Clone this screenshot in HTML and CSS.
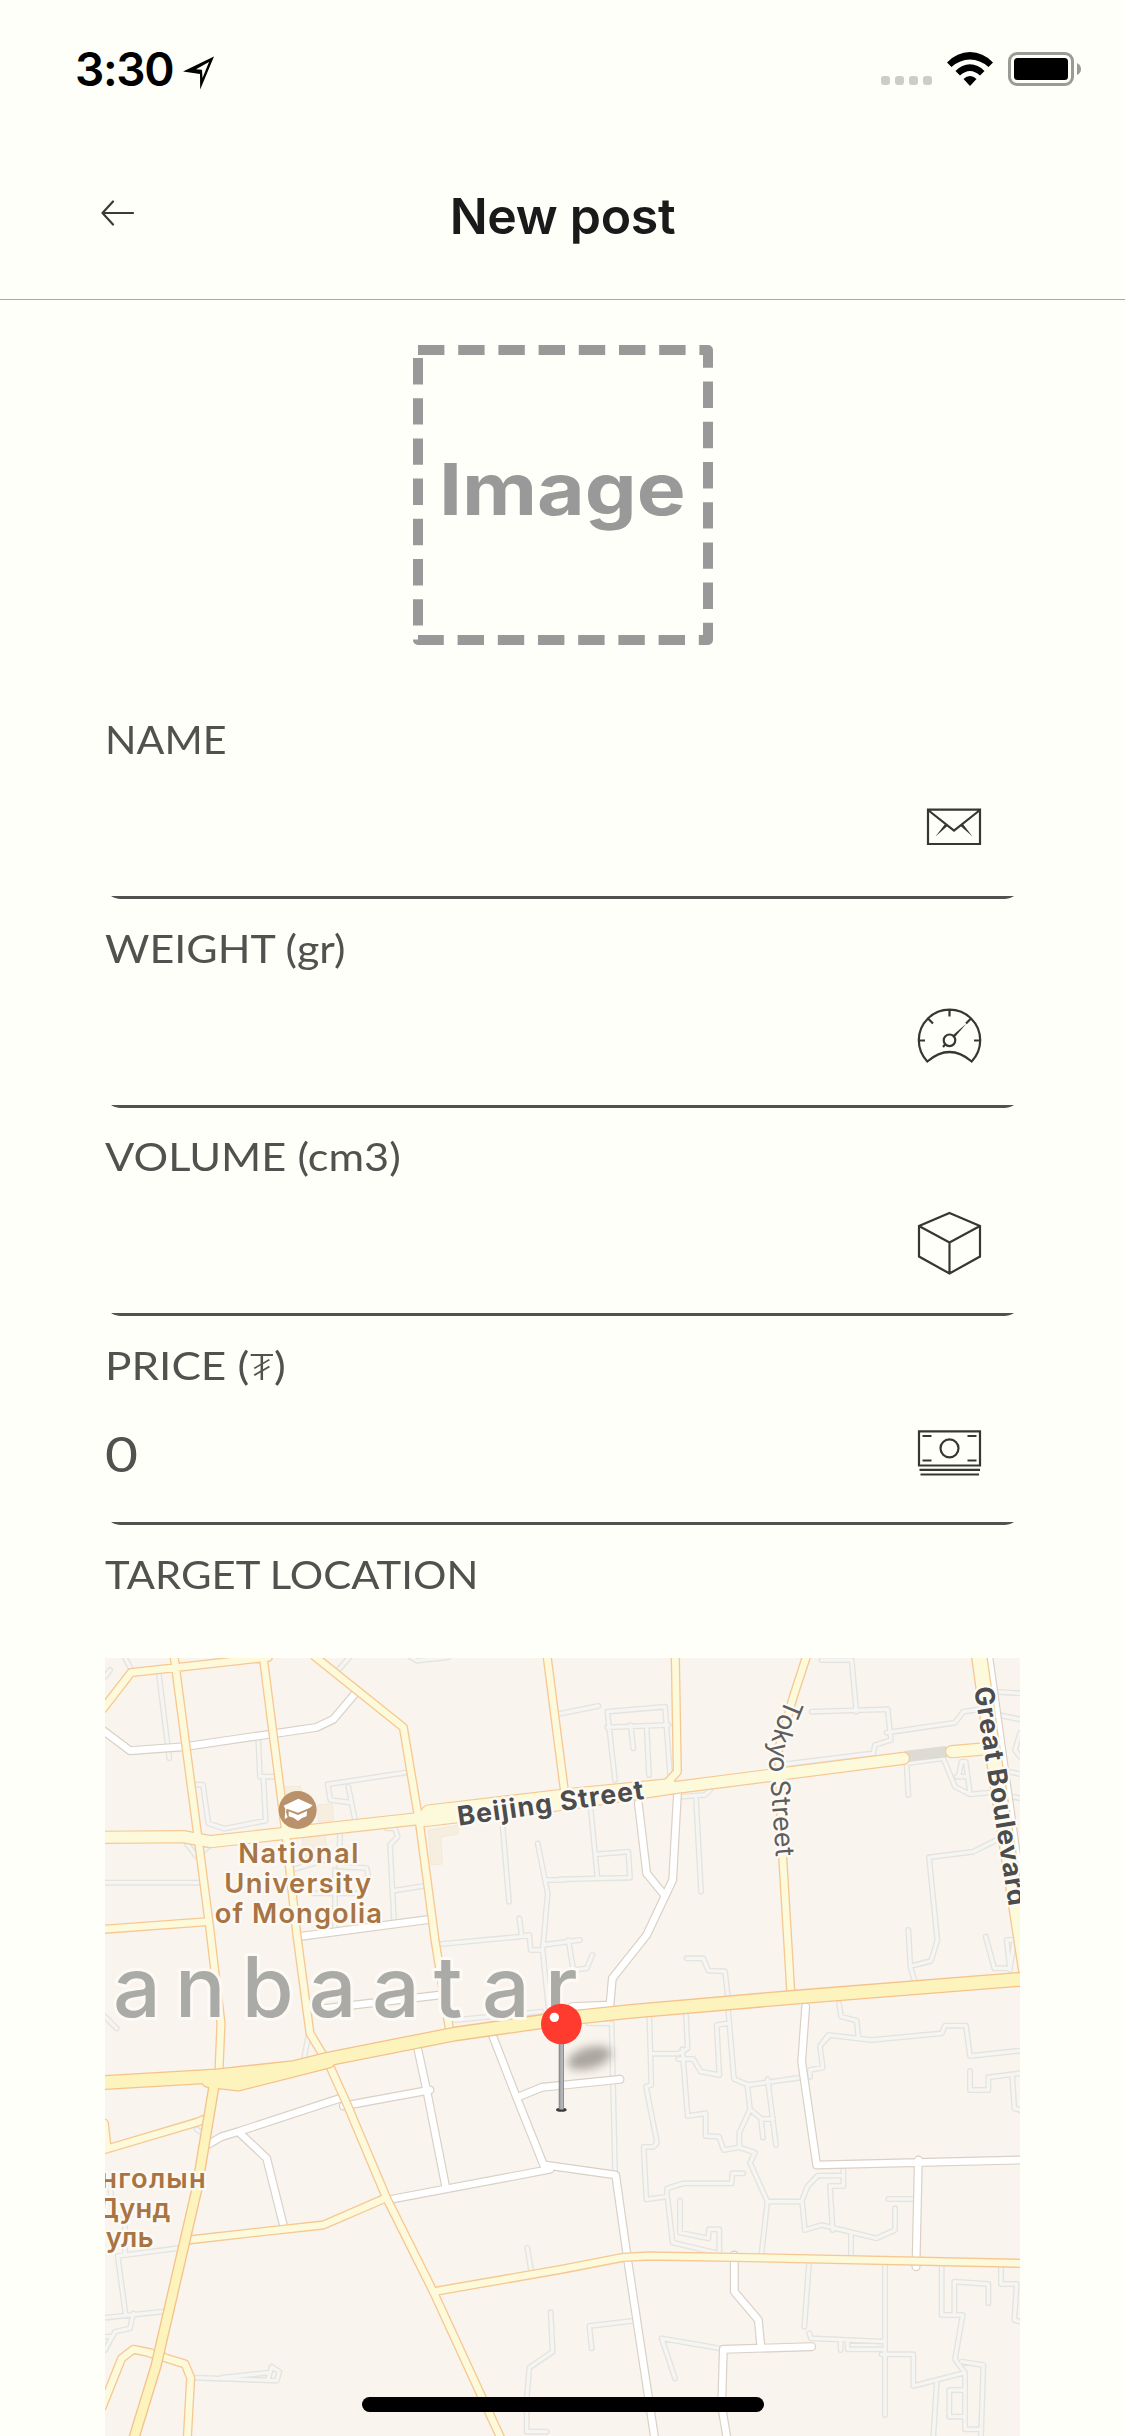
FILE: index.html
```html
<!DOCTYPE html>
<html lang="en">
<head>
<meta charset="utf-8">
<title>New post</title>
<link rel="stylesheet" href="styles.css">
</head>
<body>
<div class="screen">
  <div class="statusbar">
    <span class="time">3:30</span>
    <svg class="loc" width="32" height="34" viewBox="0 0 32 34"><path fill-rule="evenodd" d="M31 .5 17.200 33.500 17 18 0 15.500ZM26 6 13 13.300 19 13.700 19.500 22Z"/></svg>
    <div class="indicators">
      <div class="signal"><i></i><i></i><i></i><i></i></div>
      <svg class="wifi" width="46" height="34" viewBox="0 0 46 34"><path d="M0 10.500Q10 0 23 0T46 10.500L41.500 15Q33 7.500 23 7.500T4.500 15Z"/><path d="M8.500 19Q15 12.300 23 12.300T37.500 19L33 23.500Q28 19 23 19T13 23.500Z"/><path d="M16.500 27Q19.500 24 23 24T29.500 27L23 34Z"/></svg>
      <svg class="battery" width="74" height="34" viewBox="0 0 74 34"><rect x="1.500" y="1.500" width="63" height="31" rx="7.500" fill="none" stroke="#9b9b96" stroke-width="3"/><rect x="6" y="6" width="54" height="22" rx="3.500"/><path d="M69 11Q73 13 73 17T69 23Z" fill="#9b9b96"/></svg>
    </div>
  </div>
  <header class="header">
    <svg class="back" width="33" height="26" viewBox="0 0 33 26"><path d="M32 13H2M12 1.500 1.500 13 12 24.500"/></svg>
    <h1 class="title">New post</h1>
  </header>
  <main class="form">
    <div class="picker">
      <svg class="dashes" width="300" height="300" viewBox="0 0 300 300"><path d="M5 5H295V295H5Z"/></svg>
      <span class="picker-text">Image</span>
    </div>
    <div class="field">
      <label class="label l-name">NAME</label>
      <div class="input"><span class="value"></span>
        <svg class="icon" width="66" height="70" viewBox="916 792 66 70"><path d="M928 809.700H980V844H928ZM928 810 954 830.500 980 810"/><path class="solid" d="M945.500 823.500 948 825.500 935.500 836.500ZM962.500 823.500 960 825.500 972.500 836.500Z"/></svg>
      </div>
    </div>
    <div class="field">
      <label class="label l-weight">WEIGHT (gr)</label>
      <div class="input"><span class="value"></span>
        <svg class="icon" width="66" height="70" viewBox="916 1001 66 70"><path d="M927.300 1061.500A30.700 30.700 0 1 1 971.700 1061.500Q949.500 1042.500 927.300 1061.500ZM918.500 1040.500H925M974 1040.500H980.500M949.500 1010V1016.500M928 1018.500 933 1023.500M971 1018.500 966 1023.500M943 1047 945.500 1044"/><circle cx="949.500" cy="1040.300" r="5.800"/><path class="solid" d="M952.500 1035.500 966.500 1023.500 954.500 1037.500Z"/></svg>
      </div>
    </div>
    <div class="field">
      <label class="label l-volume">VOLUME (cm3)</label>
      <div class="input"><span class="value"></span>
        <svg class="icon" width="66" height="70" viewBox="916 1210 66 70"><path d="M949.500 1214 980 1227V1257.500L949.500 1274.500 919 1257.500V1227ZM919 1227 949.500 1243.500 980 1227M949.500 1243.500V1274"/></svg>
      </div>
    </div>
    <div class="field">
      <label class="label l-price">PRICE (<span class="tugrik">₮</span>)</label>
      <div class="input"><span class="value">0</span>
        <svg class="icon" width="66" height="70" viewBox="916 1418 66 70"><path d="M919 1431.300H980V1465.500H919ZM922.500 1436H931.500M967.500 1436H976.500M922.500 1460.500H931.500M967.500 1460.500H976.500M919.500 1469.800H980M920.500 1474.500H979"/><circle cx="949.500" cy="1448.300" r="9"/></svg>
      </div>
    </div>
    <label class="label l-target">TARGET LOCATION</label>
    <svg class="map" width="915" height="778" viewBox="30 54 2745 2334">
      <defs>
        <filter id="blur" x="-50%" y="-80%" width="200%" height="260%"><feGaussianBlur stdDeviation="15"/></filter>
        <path id="minor" d="M90 54 110 90M30 110 45 90M192 105 223 355M490 305 495 410H535M505 410 512 542 388 566 340 550 324 434H300M930 398 698 433 706 480 768 488M760 440 780 540M875 565H900L908 590 885 615 897 840M897 752 985 738M735 580 732 680 815 684 820 710M595 688 690 660M720 690V860M655 760H790M30 728H310M275 610 305 650 340 620M730 90 765 50M945 50 965 62 1060 52M1223 560 1242 785M1328 610 1358 760 1343 930 1360 1100M1356 720H1410M1040 912 1275 890 1303 885 1307 930H1343M1273 835 1280 885M1343 915 1455 900M1390 222 1510 198M30 1130 65 1165M1080 1140 1340 1115
        M2180 60H2270L2284 215M2150 215 2378 208 2388 300 2340 315 2335 340 2075 372M2375 278 2580 248 2605 215 2655 208M1560 420 1537 215 1710 200 1725 400M1537 262 1720 255M1607 255 1615 325M1655 262 1662 405M1487 505 1507 710M1395 718 1605 713 1600 635 1502 643M1803 475 1818 755M1760 470 1830 465 1845 450M1775 955H1825L1840 992 1890 994 1898 1065M2440 870 2446 980 2458 1020M2448 978 2508 963 2527 900 2502 652 2635 635 2705 600M2435 375 2440 465M2435 370 2545 355 2580 440 2625 463 2680 458M2590 410 2600 365H2612L2625 460M2585 410H2615M2672 890 2698 985H2745L2758 900H2735L2745 990M2700 155 2775 160M2710 225 2775 238M2740 395 2775 402M2750 470 2775 474M2775 280 2760 330 2775 350M1420 900 1435 990 1475 985 1492 945
        M1663 1130 1669 1335 1653 1340 1686 1508 1676 1520 1646 1521 1654 1678 1715 1670M1670 1241H1750L1778 1225 1773 1125M1750 1257H1795L1817 1295 1873 1305 1865 1155 1900 1150M1762 1228 1778 1428 1832 1420V1488L1872 1490 1886 1530 1933 1522 1980 1538 1965 1568 2017 1684 2120 1685 2137 1640 2168 1607 2245 1606M2245 1590V1638H2205L2213 1770M2017 1684 2000 1838M2121 1685 2130 1770 2180 1755 2345 1795 2400 1770V1705M2268 1785V1845M2380 1677H2455M1900 1115 1917 1317 1960 1335 2115 1313M1957 1335 1965 1408 2000 1437H2035M1965 1408 1933 1478V1522M2018 1318 2043 1515M1998 1437 2004 1493M1480 1150H1550L1560 1590M2232 1090 2238 1130 2285 1142 2290 1190M2185 1205 2200 1185 2330 1200 2540 1180 2550 1157H2613L2625 1248 2775 1232M2200 1190 2175 1218 2183 1283 2145 1290V1310M2625 1293V1350H2680V1312L2775 1300M2752 1312 2758 1405 2775 1410M1715 1670 1717 1645 1765 1630H1910L1912 1600H1945M1717 1670 1733 1808 1870 1840M1755 1682V1778L1840 1795 1842 1768H1873V1840
        M2142 1870 2128 2060M2370 1875V2325M2143 2080 2148 2095 2370 2105M2237 2100V2130M2258 2105V2128H2370M2360 2143H2455V2238L2610 2198 2580 2158 2603 2025H2540V1875M2578 2025V1925L2680 1932V1990M2525 2230 2515 2388M2600 2165 2665 2175 2658 2388M2610 2198V2368H2660M2610 2250H2563V2330H2610M2718 1880V1932H2765L2758 2040 2775 2045M1610 2043 1483 2058 1490 2125M1875 2125 1700 2095 1740 2215
        M640 1188 628 1250M1297 1823 1308 1890M1367 2017 1373 2135 1303 2183 1295 2280V2375H1355M300 2213 545 2222 553 2195 530 2180 520 2215M380 2213 520 2198M245 1825 68 1848 92 2025M30 2033 230 2012M115 2020 105 2065 60 2075 30 2130M30 2090H50M45 1640 55 1720 90 1750V1840M305 1468 335 1488"/>
        <path id="local" d="M25 272 105 332 270 320 665 262 715 238 785 155M610 890 1005 838M650 1110 1035 1065M1630 490 1655 700 1708 765M1748 450 1733 720 1655 885 1552 1015 1545 1095 1430 1100M1190 1180 1265 1373 1348 1580M888 1678 1365 1588M1350 1575 1562 1605 1598 1860 1678 2388M968 1225 995 1350 1052 1640M745 1398 1005 1350M340 1513 380 1490 430 1475 735 1375M430 1475 515 1555 565 1755M1265 1373 1340 1342 1575 1318M2132 1100 2120 1265 2165 1575 2775 1560M2470 1560 2463 1880M1918 1845V1955L1990 2040 1997 2115M2150 2120 1885 2128 1880 2300 1895 2388M2682 54 2772 700"/>
        <path id="street" d="M25 205 108 98 500 54 520 52M238 54 310 600 345 870 378 1150 372 1290M505 54 570 560 605 880 645 1180 705 1280 755 1390 875 1675 1015 1955 1220 2400M660 50 925 262 975 560 1020 900 1062 1160M1357 54 1408 450M1741 54 1747 395 1715 430M2133 54 2095 170 2050 330 2063 650 2087 1050M25 868 340 845M25 1530 305 1447 330 1437M28 1450 36 1520M280 1800 565 1768 685 1755 870 1675M1015 1955 1400 1888 1585 1852 1660 1848 1918 1852 2780 1870M22 2300 80 2155 115 2128 165 2138 225 2158 270 2172 287 2213 277 2395M160 2138 205 2150"/>
        <path id="avenue" d="M25 592 265 590 345 605 980 535 1000 513 1410 465 1725 434M985 542 1410 492 1745 442 2425 355M2570 335 2665 327"/>
        <path id="trunk" d="M360 1320 305 1650 183 2178 115 2400"/>
        <path id="main" d="M20 1328 365 1308 600 1282 700 1257 1080 1182 1395 1137 1600 1115 2095 1072 2790 1017M340 1322 430 1332 700 1264"/>
        <path id="boulevard" d="M2652 44 2685 280 2795 1000"/>
        <path id="tokyo" d="M2074 174C2035 265 2018 325 2024 390L2044 665"/>
        <path id="great" d="M2637 144 2744 815"/>
      </defs>
      <rect class="land" x="30" y="54" width="2745" height="2334"/>
      <path class="building" d="M573 440 617 438 620 470H575ZM668 495 712 492 716 540 670 545ZM622 595 690 585 697 640 625 650ZM1000 570 1090 556V583L1038 590 1042 672 1008 675Z"/>
      <use href="#minor" class="minor-edge"/><use href="#minor" class="minor-fill"/>
      <use href="#local" class="local-edge"/><use href="#local" class="local-fill"/>
      <path class="tunnel" d="M2430 350 2555 335"/>
      <use href="#street" class="street-edge"/><use href="#avenue" class="avenue-edge"/><use href="#boulevard" class="boulevard-edge"/>
      <use href="#street" class="street-fill"/><use href="#avenue" class="avenue-fill"/><use href="#boulevard" class="boulevard-fill"/>
      <use href="#trunk" class="trunk-edge"/><use href="#main" class="main-edge"/>
      <use href="#trunk" class="trunk-fill"/><use href="#main" class="main-fill"/>
      <text class="city" y="1132" x="54 240 440 641 831 1016 1161 1350">anbaatar</text>
      <circle class="poi" cx="608" cy="510" r="57"/>
      <path class="cap" d="M566 497 610 476 653 496 645 503 609 518 575 506 573 517 578 532 569 537 571 506ZM581 514 609 525 636 513 635 529Q620 532 609 543 596 531 581 529Z"/>
      <g class="place">
        <text x="430" y="668" textLength="360">National</text>
        <text x="388" y="758" textLength="440">University</text>
        <text x="359" y="848" textLength="502">of Mongolia</text>
        <text x="16" y="1643" textLength="316">нголын</text>
        <text x="2" y="1733" textLength="224">Дунд</text>
        <text x="32" y="1821" textLength="144">уль</text>
      </g>
      <text class="road strong" transform="translate(1091 557) rotate(-8.200)" textLength="564">Beijing Street</text>
      <text class="road"><textPath href="#tokyo" textLength="486">Tokyo Street</textPath></text>
      <text class="road strong"><textPath href="#great" textLength="664">Great Boulevard</textPath></text>
      <ellipse class="shadow" cx="1483" cy="1254" rx="68" ry="32" transform="rotate(-16 1483 1254)"/>
      <ellipse cx="1399" cy="1409" rx="16" ry="6" fill="#3c3c3c"/>
      <path d="M1399 1205V1408" stroke="#8c8e92" stroke-width="16"/><path d="M1400 1205V1408" stroke="#b2b4b8" stroke-width="8"/>
      <circle cx="1399" cy="1152" r="61" fill="#ff3b30"/><circle cx="1378" cy="1132" r="14" fill="#fff"/>
    </svg>
  </main>
  <div class="home"></div>
</div>
</body>
</html>
```
FILE: styles.css
```css
* { box-sizing: border-box; }
body { margin: 0; background: #fffffa; }
.screen {
  position: relative;
  width: 1125px;
  height: 2436px;
  overflow: hidden;
  background: #fffffa;
  font-family: Inter, "Liberation Sans", sans-serif;
}
.statusbar { display: flex; align-items: flex-start; height: 132px; padding: 52px 43px 0 75px; }
.time { width: 108px; font-size: 46px; line-height: 34px; font-weight: 600; letter-spacing: -1.3px; color: #000; }
.loc { margin-top: 4px; }
.indicators { display: flex; margin-left: auto; }
.signal { display: flex; gap: 5px; padding-top: 24px; margin-right: 15px; }
.signal i { width: 9px; height: 9px; border-radius: 3px; background: #cdcdc8; }
.wifi { margin-right: 15px; }
.header { display: grid; grid-template-columns: 100px 1fr 100px; height: 168px; border-bottom: 1px solid #a7a7aa; }
.back { margin: 68px 0 0 101px; fill: none; stroke: #3b3b36; stroke-width: 2.2; stroke-linecap: round; stroke-linejoin: round; }
.title { margin: 54px 0 0; text-align: center; font-size: 50px; line-height: 60px; font-weight: 600; letter-spacing: -0.3px; color: #1a1a1a; }
.form { display: flex; flex-direction: column; padding: 45px 105px 0; }
.picker { display: grid; place-items: center; width: 300px; height: 300px; margin: 0 auto 75px; }
.picker > * { grid-area: 1 / 1; }
.dashes { fill: none; stroke: #999; stroke-width: 10; stroke-dasharray: 26.4 13.8; stroke-linejoin: round; }
.picker-text { padding-bottom: 13px; font-size: 71.500px; line-height: 80px; font-weight: 700; color: #999; transform: scaleX(1.15); }
.field { height: 208.700px; }
.label { display: block; height: 48px; font-family: Lato, Inter, sans-serif; font-size: 38px; line-height: 39px; color: #51514f; transform-origin: 0 0; white-space: nowrap; }
.l-name { transform: scaleX(1.085); }
.l-weight { transform: scaleX(1.13); }
.l-volume { transform: scaleX(1.14); }
.l-price { transform: scaleX(1.16); }
.l-target { transform: scaleX(1.1); }
.tugrik { font-family: "Noto Sans", "DejaVu Sans", sans-serif; font-size: 37px; font-weight: 300; line-height: 1; }
.input {
  display: flex;
  justify-content: space-between;
  height: 131px;
  border-radius: 15px;
  background: linear-gradient(#51514f, #51514f) bottom / 100% 3px no-repeat;
}
.value { padding-top: 29px; font-family: Lato, sans-serif; font-size: 49px; line-height: 60px; color: #51514f; transform-origin: 0 0; transform: scaleX(1.16); }
.icon { margin: 24px 38px 0 0; fill: none; stroke: #363632; stroke-width: 2.2; }
.icon .solid { fill: #363632; stroke: none; }
.map { display: block; margin-top: 55.200px; }
.map use { fill: none; stroke-linejoin: round; stroke-linecap: round; }
.land { fill: #f9f4ed; }
.building { fill: #f6eedf; stroke: #f1e6d3; stroke-width: 2; }
.minor-edge { stroke: #e5e3dd; stroke-width: 18; }
.minor-fill { stroke: #f5f5f3; stroke-width: 10; }
.local-edge { stroke: #d9d0c6; stroke-width: 27; }
.local-fill { stroke: #fff; stroke-width: 20; }
.tunnel { stroke: #dddbd2; stroke-width: 34; }
.street-edge { stroke: #f6c893; stroke-width: 28; }
.street-fill { stroke: #fdfadb; stroke-width: 20; }
.avenue-edge { stroke: #f6c893; stroke-width: 40; }
.avenue-fill { stroke: #fdfadb; stroke-width: 33; }
.boulevard-edge { stroke: #f6c893; stroke-width: 50; }
.boulevard-fill { stroke: #fdfadb; stroke-width: 42; }
.trunk-edge { stroke: #f5c28b; stroke-width: 34; }
.trunk-fill { stroke: #fdf4bd; stroke-width: 26; }
.main-edge { stroke: #f5c28b; stroke-width: 45; }
.main-fill { stroke: #fdf4bd; stroke-width: 37; }
.map text { paint-order: stroke; stroke: #fdfaf5; stroke-linejoin: round; }
.city { font-size: 252px; font-weight: 450; fill: #aaaaa7; stroke-width: 18; }
.place { font-size: 82px; font-weight: 600; fill: #a87444; }
.place text { stroke-width: 14; }
.road { font-size: 80px; fill: #5e5e5e; stroke-width: 14; }
.strong { font-weight: 700; fill: #4c4c4c; }
.poi { fill: #b9916b; }
.cap { fill: #fff; }
.shadow { fill: #55534c; opacity: 0.48; filter: url(#blur); }
.home { position: absolute; left: 362px; top: 2397px; width: 402px; height: 15px; border-radius: 8px; background: #000; }
```
